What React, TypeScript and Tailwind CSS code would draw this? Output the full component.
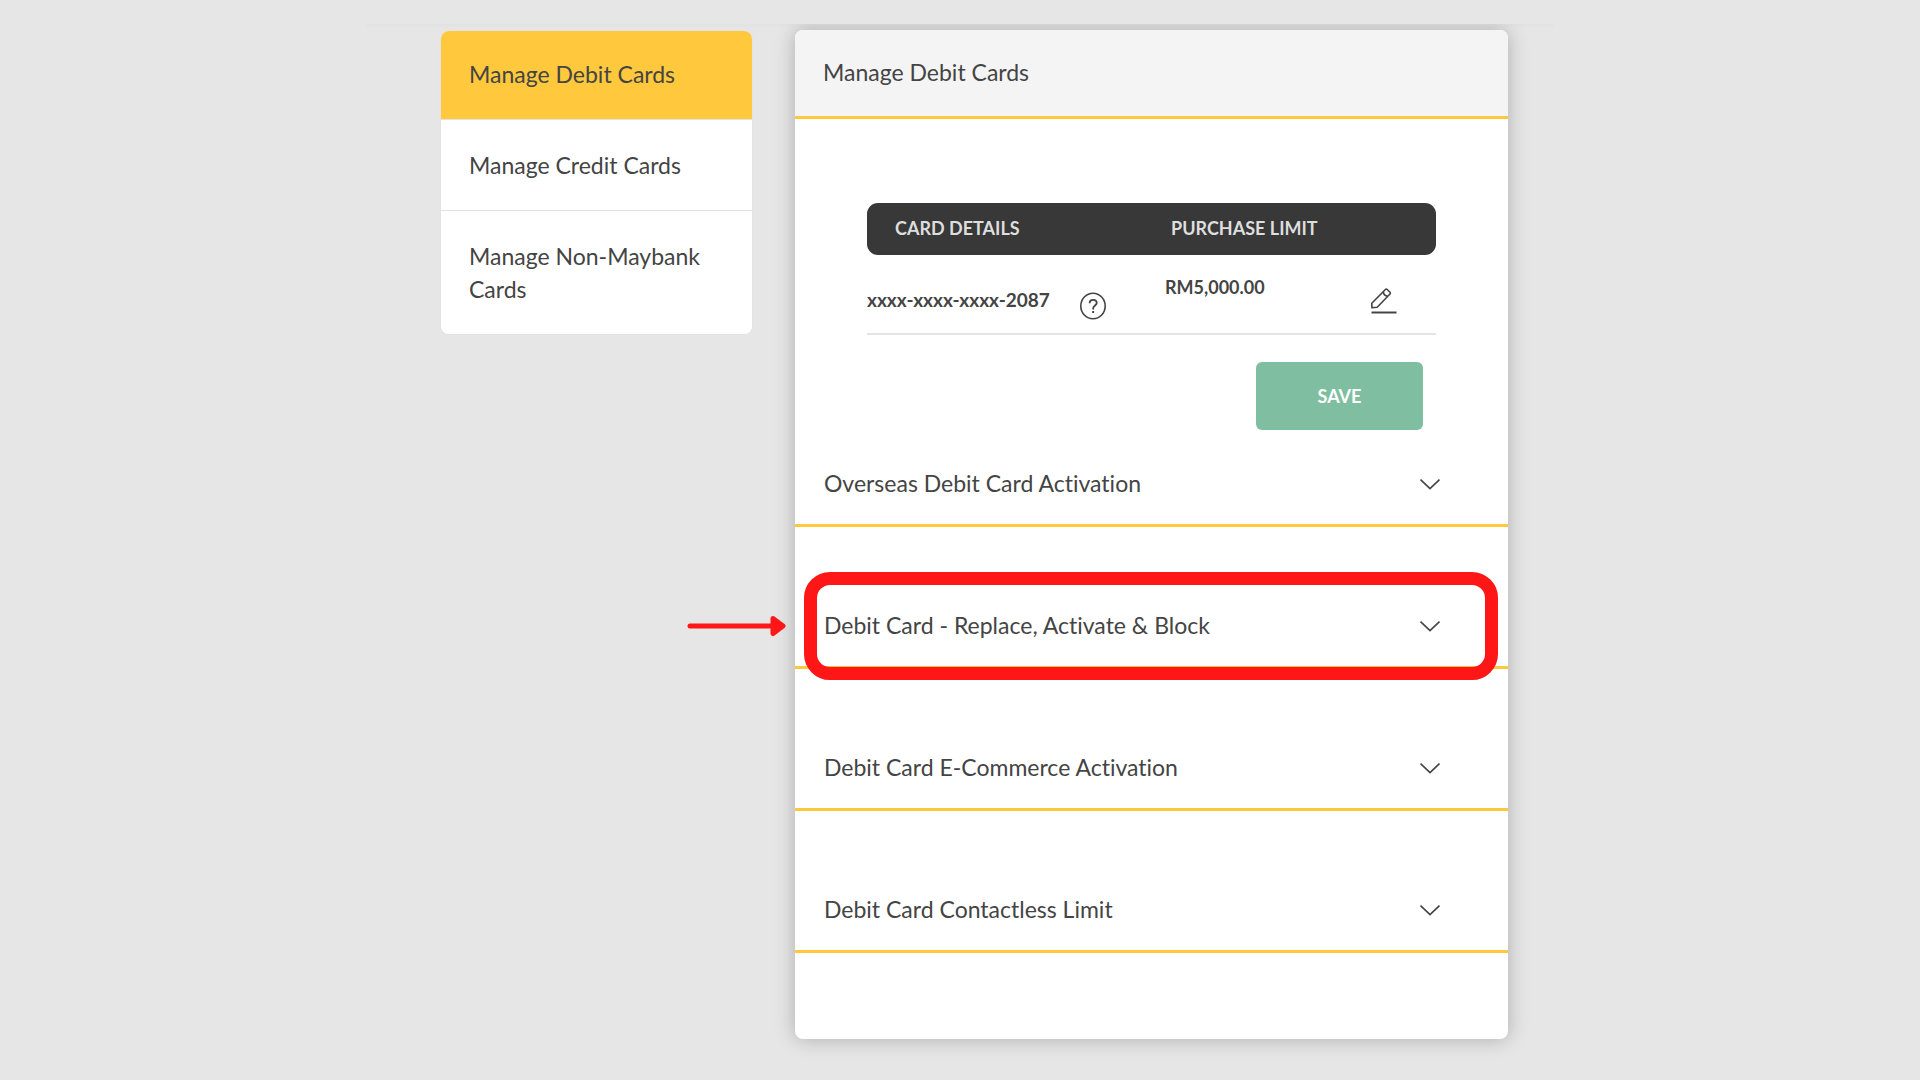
import React, { useState } from 'react';

const MENU_ITEMS = ['Manage Debit Cards', 'Manage Credit Cards', 'Manage Non-Maybank Cards'];

const SECTIONS = [
  { title: 'Overseas Debit Card Activation', highlighted: false },
  { title: 'Debit Card - Replace, Activate & Block', highlighted: true },
  { title: 'Debit Card E-Commerce Activation', highlighted: false },
  { title: 'Debit Card Contactless Limit', highlighted: false },
];

const ChevronIcon = () => (
  <svg className="w-5 h-3 shrink-0" viewBox="0 0 20 12" fill="none" stroke="currentColor" strokeWidth="1.7" aria-hidden="true">
    <path d="M0.5 1.5L10 10.5L19.5 1.5" />
  </svg>
);

const HelpIcon = () => (
  <svg className="w-[26px] h-7" viewBox="0 0 26 28" fill="none" stroke="currentColor" aria-hidden="true">
    <ellipse cx="13" cy="14" rx="12.2" ry="12.8" strokeWidth="1.6" />
    <path d="M9.6 11.2C9.6 8.8 11 7.8 13.1 7.8C15.2 7.8 16.7 9 16.7 10.9C16.7 13.4 13.2 13.6 13.2 16.3V17.6" strokeWidth="1.8" />
    <path d="M13.2 19V21" strokeWidth="2" />
  </svg>
);

const EditIcon = () => (
  <svg className="w-[26px] h-[26px]" viewBox="0 0 26 26" fill="none" stroke="currentColor" strokeWidth="1.6" strokeLinejoin="round" aria-hidden="true">
    <path d="M0.8 15.3L14.4 1.5C14.9 1 15.7 1 16.2 1.5L19 4.3C19.5 4.8 19.5 5.5 19 6L6.2 19.2L0.9 19.8Z" />
    <path d="M12.4 3.8C12.5 6.4 14 8 16.8 8.2" />
    <path d="M0.5 24.5H25.5" strokeWidth="2" />
  </svg>
);

// Red frame plus the arrow pointing at it
const Highlight = () => (
  <div className="absolute -top-[13px] -bottom-[11px] left-[9px] right-[10px] border-[13px] border-[#ff1616] rounded-[26px] pointer-events-none">
    <svg className="absolute -left-[130px] top-1/2 -translate-y-1/2 w-[100px] h-[22px]" viewBox="0 0 100 22" fill="#ff1616" stroke="#ff1616" strokeLinecap="round" strokeLinejoin="round" aria-hidden="true">
      <path d="M3 11H88" strokeWidth="5" />
      <path d="M86 3.5L96 11L86 18.5Z" strokeWidth="5" />
    </svg>
  </div>
);

const App: React.FC = () => {
  const [activeItem, setActiveItem] = useState(0);
  const [openSection, setOpenSection] = useState<number | null>(null);

  return (
    <div className="min-h-screen bg-[#e6e6e6] pt-6 font-['Lato',sans-serif] text-[#444444] text-[23px] leading-[33px] [font-variant-ligatures:none]">
      <main className="max-w-[1190px] mx-auto grid grid-cols-[76fr_311fr_43fr_713fr_47fr] items-start overflow-hidden pt-1.5 pb-10 shadow-[inset_0_4px_2px_-1px_#e3e3e3]">
        <nav className="col-start-2 mt-px rounded-lg overflow-hidden bg-white divide-y divide-[#e2e2e2] shadow-[0_0_2px_#dddddd]">
          {MENU_ITEMS.map((item, i) => (
            <a
              key={item}
              href="#"
              onClick={(e) => {
                e.preventDefault();
                setActiveItem(i);
              }}
              className={`block px-7 pt-[29px] pb-7 first:pt-[27px] ${i === activeItem ? 'bg-[#ffc83d]' : 'bg-white'}`}
            >
              {item}
            </a>
          ))}
        </nav>

        <section className="col-start-4 bg-white rounded-lg pb-7 shadow-[0_0_20px_rgba(0,0,0,0.25)]">
          <h1 className="px-7 pt-[26px] pb-[27px] bg-[#f4f4f4] rounded-t-lg border-b-3 border-[#ffc83d]">Manage Debit Cards</h1>

          <div className="px-[72px] pt-[84px]">
            <table className="w-full table-fixed text-left text-[18px] leading-[26px]">
              <thead>
                <tr className="bg-[#383838] text-[#dedede] uppercase">
                  <th className="w-[276px] px-7 pt-3 pb-3.5 rounded-l-[11px] font-bold">Card Details</th>
                  <th className="px-7 pt-3 pb-3.5 rounded-r-[11px] font-bold">Purchase Limit</th>
                </tr>
              </thead>
              <tbody>
                <tr className="border-b-2 border-[#e4e4e4] font-bold">
                  <td className="align-top">
                    <div className="h-[78px] flex items-start gap-[30px] pt-8 text-[19px]">
                      <span>xxxx-xxxx-xxxx-2087</span>
                      <button type="button" aria-label="Card help" className="pt-[5px]">
                        <HelpIcon />
                      </button>
                    </div>
                  </td>
                  <td className="pl-[22px] pr-[39px] align-top">
                    <div className="flex items-start justify-between pt-[19px]">
                      <span>RM5,000.00</span>
                      <button type="button" aria-label="Edit limit" className="pt-3.5">
                        <EditIcon />
                      </button>
                    </div>
                  </td>
                </tr>
              </tbody>
            </table>
            <div className="flex justify-end pt-[27px] pr-[13px]">
              <button type="button" className="w-[167px] py-[21px] rounded-md bg-[#7fbea1] text-white text-[18px] leading-[26px] font-bold">
                SAVE
              </button>
            </div>
          </div>

          <div className="pt-[13px]">
            {SECTIONS.map((section, i) => (
              <div key={section.title} className="relative mb-[58px]">
                <h2 className="border-b-3 border-[#ffc83d]">
                  <button
                    type="button"
                    aria-expanded={openSection === i}
                    onClick={() => setOpenSection(openSection === i ? null : i)}
                    className="w-full flex items-center justify-between text-left pl-[29px] pr-[68px] py-6"
                  >
                    {section.title}
                    <ChevronIcon />
                  </button>
                </h2>
                {section.highlighted && <Highlight />}
              </div>
            ))}
          </div>
        </section>
      </main>
    </div>
  );
};

export default App;
